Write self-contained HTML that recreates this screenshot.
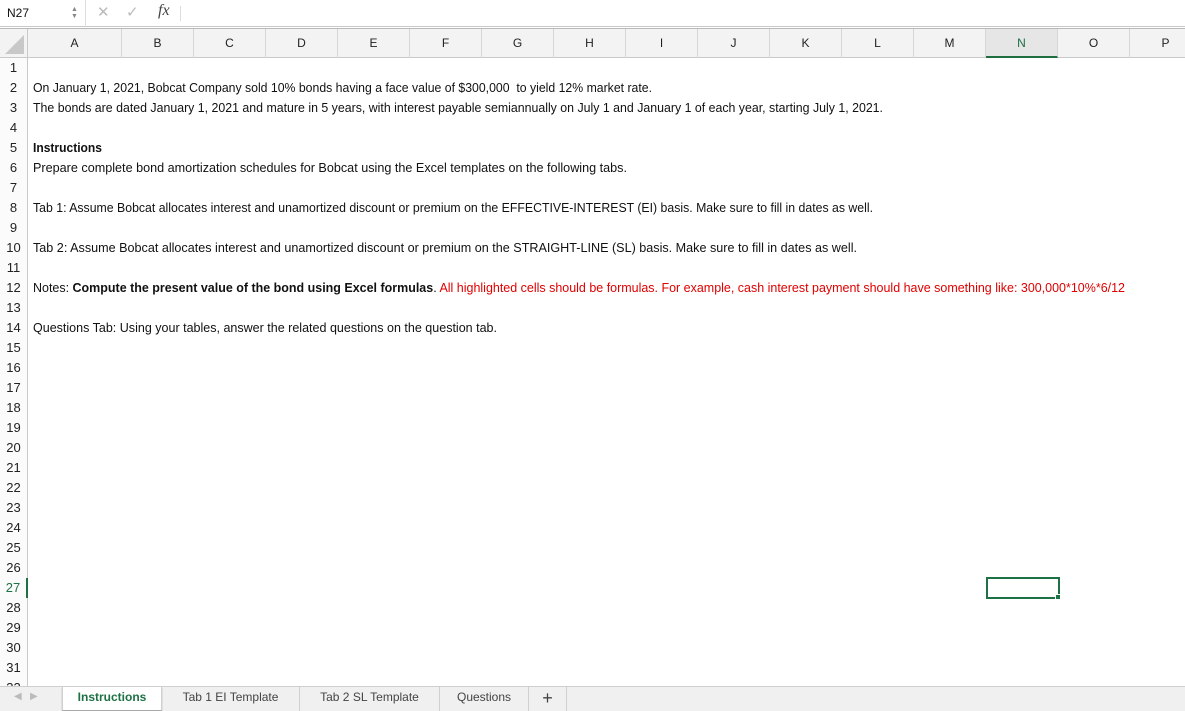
<!DOCTYPE html>
<html><head><meta charset="utf-8"><style>
*{margin:0;padding:0;box-sizing:border-box}
body{width:1185px;height:711px;overflow:hidden;background:#fff;font-family:"Liberation Sans",Arial,sans-serif;position:relative;color:#111}
.abs{position:absolute}
.fb{top:0;left:0;width:1185px;height:27px;background:#fff;border-bottom:1px solid #c8c8c8}
.hdr{top:28px;left:0;width:1185px;height:30px;background:#f3f3f3;border-top:1px solid #b9b9b9;border-bottom:1px solid #c9c9c9}
.col{position:absolute;top:0;height:29px;border-right:1px solid #d6d6d6;font-size:12px;text-align:center;line-height:29px;color:#222}
.rh{position:absolute;left:0;width:28px;height:20px;border-right:1px solid #c9c9c9;background:#fbfbfb;font-size:13px;text-align:center;line-height:20px;color:#222}
.t{position:absolute;left:33px;font-size:13px;line-height:20px;white-space:nowrap;transform-origin:0 50%}
.tabs{top:686px;left:0;width:1185px;height:25px;background:#f0f0f0;border-top:1px solid #cfcfcf}
.tab{position:absolute;top:0;height:24px;font-size:12px;line-height:21px;text-align:center;color:#444;border-right:1px solid #d0d0d0}
</style></head><body>
<div class="abs fb">
 <div class="abs" style="left:0;top:0;width:86px;height:27px;border-right:1px solid #ddd;font-size:12px;line-height:27px;padding-left:7px">N27</div>
 <div class="abs" style="left:71px;top:6px;font-size:7px;color:#888;line-height:7px">▲<br>▼</div>
 <div class="abs" style="left:97px;top:3px;font-size:15px;color:#bbb">✕</div>
 <div class="abs" style="left:126px;top:3px;font-size:15px;color:#bbb">✓</div>
 <div class="abs" style="left:158px;top:2px;font-size:16px;font-style:italic;font-family:'Liberation Serif',serif;color:#444">fx</div>
 <div class="abs" style="left:180px;top:6px;width:1px;height:15px;background:#ddd"></div>
</div>
<div class="abs hdr">
 <div class="abs" style="left:0;top:0;width:28px;height:29px;border-right:1px solid #c9c9c9"><svg width="28" height="29"><polygon points="24,6 24,25 5,25" fill="#c8c8c8"/></svg></div>
 <div class="col" style="left:28px;width:94px">A</div>
 <div class="col" style="left:122px;width:72px">B</div>
 <div class="col" style="left:194px;width:72px">C</div>
 <div class="col" style="left:266px;width:72px">D</div>
 <div class="col" style="left:338px;width:72px">E</div>
 <div class="col" style="left:410px;width:72px">F</div>
 <div class="col" style="left:482px;width:72px">G</div>
 <div class="col" style="left:554px;width:72px">H</div>
 <div class="col" style="left:626px;width:72px">I</div>
 <div class="col" style="left:698px;width:72px">J</div>
 <div class="col" style="left:770px;width:72px">K</div>
 <div class="col" style="left:842px;width:72px">L</div>
 <div class="col" style="left:914px;width:72px">M</div>
 <div class="col" style="left:986px;width:72px;background:#e6e6e6;color:#1e6e42;border-bottom:2px solid #1e6e42;height:29px">N</div>
 <div class="col" style="left:1058px;width:72px">O</div>
 <div class="col" style="left:1130px;width:72px">P</div>
</div>
<div id="rows"></div>
<div class="t" style="top:78px">On January 1, 2021, Bobcat Company sold 10% bonds having a face value of $300,000&nbsp; to yield 12% market rate.</div>
<div class="t" style="top:98px">The bonds are dated January 1, 2021 and mature in 5 years, with interest payable semiannually on July 1 and January 1 of each year, starting July 1, 2021.</div>
<div class="t" style="top:138px;font-weight:bold">Instructions</div>
<div class="t" style="top:158px">Prepare complete bond amortization schedules for Bobcat using the Excel templates on the following tabs.</div>
<div class="t" style="top:198px">Tab 1: Assume Bobcat allocates interest and unamortized discount or premium on the EFFECTIVE-INTEREST (EI) basis. Make sure to fill in dates as well.</div>
<div class="t" style="top:238px">Tab 2: Assume Bobcat allocates interest and unamortized discount or premium on the STRAIGHT-LINE (SL) basis. Make sure to fill in dates as well.</div>
<div class="t" style="top:278px">Notes: <b>Compute the present value of the bond using Excel formulas</b>. <span style="color:#e00000">All highlighted cells should be formulas. For example, cash interest payment should have something like: 300,000*10%*6/12</span></div>
<div class="t" style="top:318px">Questions Tab: Using your tables, answer the related questions on the question tab.</div>
<div class="abs" style="left:986px;top:577px;width:74px;height:22px;border:2px solid #1e7145"></div>
<div class="abs" style="left:1055px;top:594px;width:6px;height:6px;background:#1e7145;border:1px solid #fff"></div>
<div class="abs tabs">
 <div class="abs" style="left:14px;top:4px;font-size:10px;color:#bbb">◀&nbsp;&nbsp;&nbsp;▶</div>
 <div class="tab" style="left:62px;width:100px;background:#fff;color:#1e7145;font-weight:bold;border-left:1px solid #d0d0d0;height:23px;box-shadow:0 1px 1px #999">Instructions</div>
 <div class="tab" style="left:162px;width:138px">Tab 1 EI Template</div>
 <div class="tab" style="left:300px;width:140px">Tab 2 SL Template</div>
 <div class="tab" style="left:440px;width:89px">Questions</div>
 <div class="tab" style="left:529px;width:38px;font-size:18px;line-height:23px">+</div>
</div>
<script>
(function(){
var r=document.getElementById('rows'),h='';
for(var i=1;i<=32;i++){var y=58+20*(i-1);if(y>686)break;
var st='top:'+y+'px';if(i==27)st+=';color:#1e7145;border-right:2px solid #1e7145';
h+='<div class="rh" style="'+st+'">'+i+'</div>';}
r.innerHTML=h;
var W=[619,850,69,594,840,824,1092,464];
var ts=document.querySelectorAll('.t');
for(var k=0;k<ts.length;k++){var w=ts[k].getBoundingClientRect().width;ts[k].style.transform='scaleX('+(W[k]/w)+')';}
})();
</script>
</body></html>
